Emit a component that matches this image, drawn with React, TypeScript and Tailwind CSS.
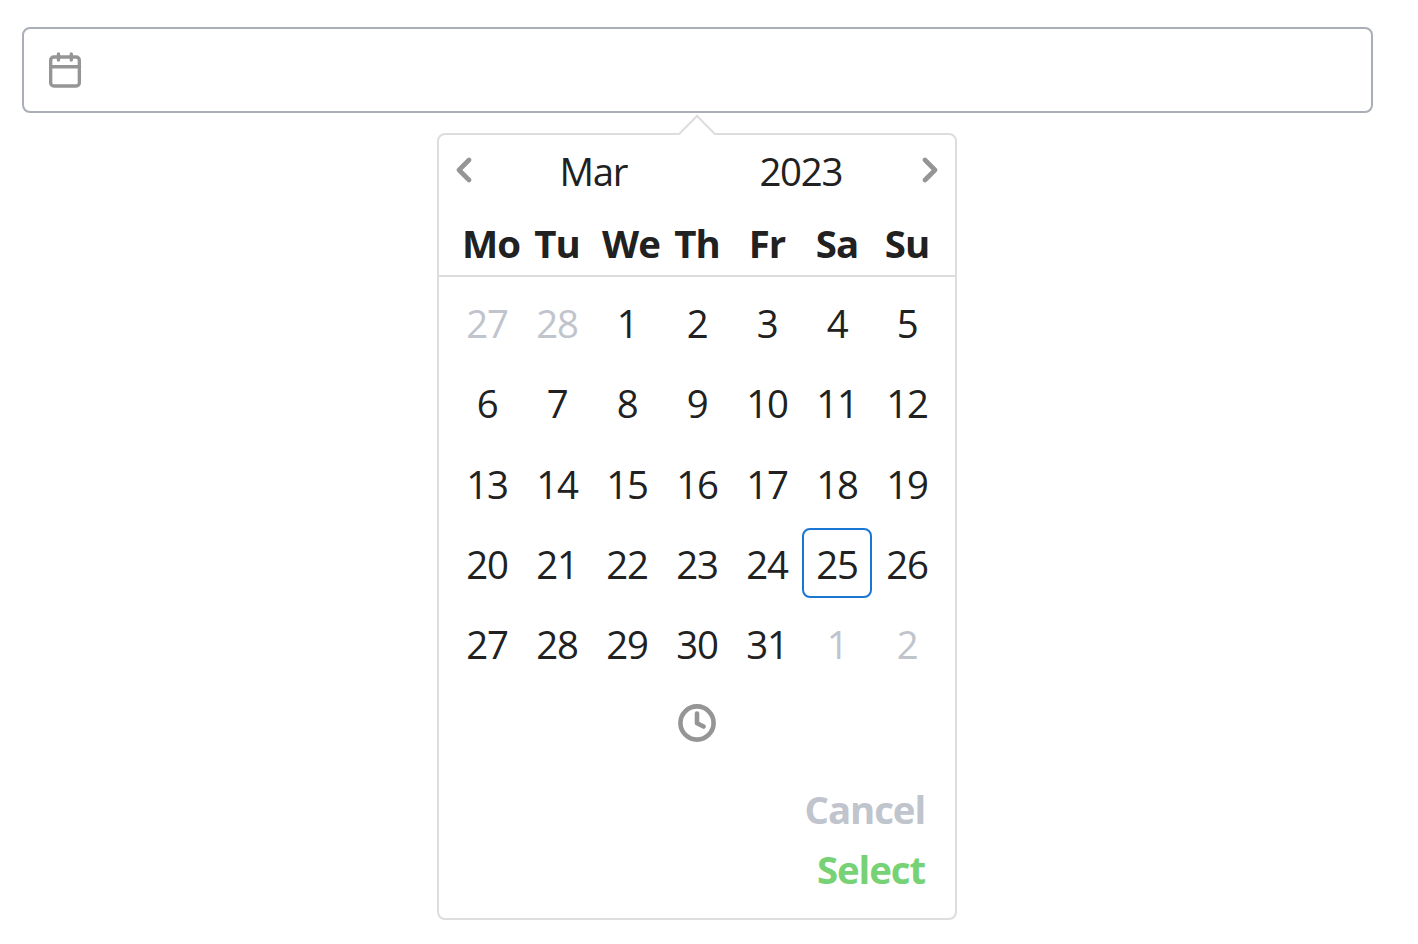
import clsx from "clsx";
import { useState } from "react";

const weekDays = ["Mo", "Tu", "We", "Th", "Fr", "Sa", "Su"];

type Day = { value: number; current: boolean };

function getDays(): Day[] {
  const days: Day[] = [27, 28].map((value) => ({ value, current: false }));
  for (let i = 1; i <= 31; i++) {
    days.push({ value: i, current: true });
  }
  return [
    ...days,
    { value: 1, current: false },
    { value: 2, current: false },
  ];
}

function CalendarIcon() {
  return (
    <svg
      className="size-[38.4px]"
      viewBox="0 0 32 32"
      fill="none"
      stroke="currentColor"
      strokeWidth="2.8"
      strokeLinecap="round"
    >
      <rect x="3.9" y="5" width="23.9" height="24.2" rx="2.667" />
      <path d="M10.4 2.4v5.2M21.1 2.4v5.2M4 13.1h24" />
    </svg>
  );
}

function Chevron({ direction }: { direction: "left" | "right" }) {
  return (
    <svg
      className="h-[26px] w-4"
      viewBox="0 0 16 26"
      fill="none"
      stroke="currentColor"
      strokeWidth="4.6"
      strokeLinecap="round"
      strokeLinejoin="round"
    >
      <path
        d={direction === "left" ? "M13 3L3 13l10 10" : "M3 3l10 10L3 23"}
      />
    </svg>
  );
}

function ClockIcon() {
  return (
    <svg
      className="size-[38px]"
      viewBox="0 0 38 38"
      fill="none"
      stroke="currentColor"
      strokeWidth="4.6"
      strokeLinecap="round"
      strokeLinejoin="round"
    >
      <circle cx="19" cy="19" r="16.6" />
      <path d="M19 9.5v9.7l6.6 3.3" />
    </svg>
  );
}

export default function App() {
  const [selected, setSelected] = useState<number>();

  return (
    <div className="flex h-[944px] flex-col bg-white pt-[27px] pl-[22px] font-['Open_Sans','Noto_Sans',sans-serif] text-[38.4px] leading-[58px] tracking-[-1.3px] text-[#212121]">
      <div className="flex h-[86px] w-[1351px] items-center rounded-lg border-2 border-[#aaaeb7] bg-white pl-[22px] text-[#959595]">
        <CalendarIcon />
      </div>

      <div className="relative mt-5 ml-[415px] h-[787px] w-[520px] rounded-lg border-2 border-[#ddd] bg-white">
        <div className="absolute -top-[15px] left-[245px] size-[26px] rotate-45 border-t-2 border-l-2 border-[#ddd] bg-white" />

        <div className="relative flex h-[70px] items-center">
          <button className="flex w-[51px] justify-center pr-px text-[#959595]">
            <Chevron direction="left" />
          </button>
          <button className="flex-1 pt-0.5 pr-px">Mar</button>
          <button className="flex-1 pt-0.5">2023</button>
          <button className="flex w-[51px] justify-center text-[#959595]">
            <Chevron direction="right" />
          </button>
        </div>

        <div className="flex h-[72px] border-b-2 border-[#ddd] px-[13px] pt-1 font-bold tracking-[-0.9px]">
          {weekDays.map((day) => (
            <div
              key={day}
              className="h-[62px] w-[70px] px-[10px] text-center leading-[68px]"
            >
              {day}
            </div>
          ))}
        </div>

        <div className="mt-[10px] grid grid-cols-[repeat(7,70px)] gap-y-[10.3px] px-[13px]">
          {getDays().map(({ value, current }, i) => (
            <button
              key={i}
              className={clsx(
                "h-[70px] rounded-lg border-2 pt-0.5 text-center",
                current && value === 25
                  ? "border-[#1976d2]"
                  : "border-transparent",
                !current && "text-[#c0c4cc]",
                current && value === selected && "bg-[#1976d2] text-white"
              )}
              onClick={() => current && setSelected(value)}
            >
              {value}
            </button>
          ))}
        </div>

        <div className="mt-[26px] flex justify-center text-[#959595]">
          <ClockIcon />
        </div>

        <div className="mt-[37px] flex flex-col items-end pr-[30px] leading-[60px] font-bold tracking-[-1.1px]">
          <button className="text-[#c0c4cc]">Cancel</button>
          <button className="text-[#76d275]">Select</button>
        </div>
      </div>
    </div>
  );
}
